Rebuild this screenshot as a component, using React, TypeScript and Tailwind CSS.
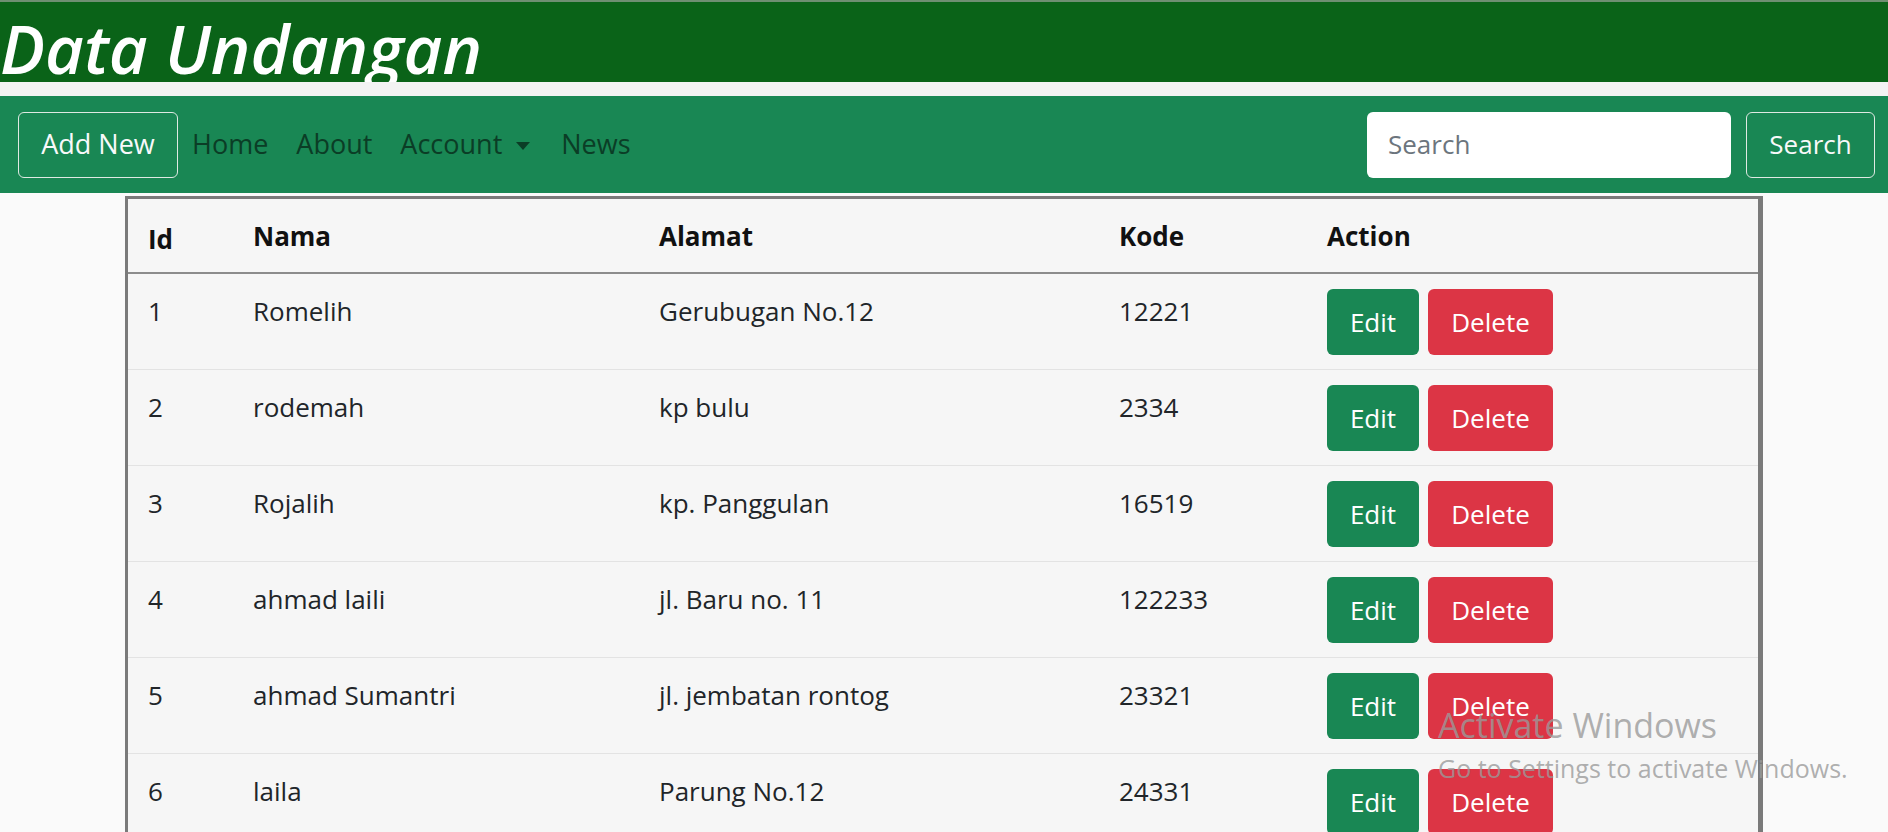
const rows = [
  { id: 1, nama: 'Romelih', alamat: 'Gerubugan No.12', kode: '12221' },
  { id: 2, nama: 'rodemah', alamat: 'kp bulu', kode: '2334' },
  { id: 3, nama: 'Rojalih', alamat: 'kp. Panggulan', kode: '16519' },
  { id: 4, nama: 'ahmad laili', alamat: 'jl. Baru no. 11', kode: '122233' },
  { id: 5, nama: 'ahmad Sumantri', alamat: 'jl. jembatan rontog', kode: '23321' },
  { id: 6, nama: 'laila', alamat: 'Parung No.12', kode: '24331' },
]

export default function App() {
  return (
    <div className="relative min-h-screen overflow-hidden bg-[#fafafa] font-['Open_Sans','Noto_Sans',sans-serif] text-[#212529]">
      {/* Header */}
      <header className="h-[82px] overflow-hidden bg-[#0a6318] border-t-2 border-[#6f8f72]">
        <h1 className="text-[67px] leading-[92px] italic font-semibold text-white">
          Data Undangan
        </h1>
      </header>
      <div className="h-[14px] bg-[#f3f3f3]" />

      {/* Navbar */}
      <nav className="h-[97px] bg-[#198754] flex items-center pl-[18px] pr-[13px]">
        <button className="h-[66px] w-[160px] rounded-[6px] border border-[#dfe9e3] text-[#f8f9fa] text-[27px]">
          Add New
        </button>
        <div className="flex items-center text-[27px] text-[#0b3d26]">
          <a className="px-[14px]">Home</a>
          <a className="px-[14px]">About</a>
          <a className="px-[14px] flex items-center gap-[14px]">
            Account
            <span className="w-0 h-0 border-l-[7px] border-r-[7px] border-t-[8px] border-l-transparent border-r-transparent border-t-[#0b3d26] mt-[2px]" />
          </a>
          <a className="px-[14px] ml-[3px]">News</a>
        </div>
        <div className="ml-auto flex items-center gap-[15px]">
          <div className="h-[66px] w-[364px] rounded-[6px] bg-white flex items-center pl-[21px] text-[26px] text-[#6c757d]">
            Search
          </div>
          <button className="h-[66px] w-[129px] rounded-[6px] border border-[#dfe9e3] text-[#f8f9fa] text-[26px]">
            Search
          </button>
        </div>
      </nav>

      {/* Table */}
      <div className="mt-[3px] ml-[125px] w-[1638px] border-l-[3px] border-r-[5px] border-t-[3px] border-[#7a7a7a] bg-[#f6f6f6]">
        <table className="w-full border-collapse text-[26px]">
          <colgroup>
            <col className="w-[111px]" />
            <col className="w-[406px]" />
            <col className="w-[460px]" />
            <col className="w-[208px]" />
            <col />
          </colgroup>
          <thead>
            <tr className="border-b-[2px] border-[#8c8c8c] text-left font-bold text-[#111]">
              <th className="pl-[20px] pt-[19px] pb-[12px] leading-[42px]">Id</th>
              <th className="pl-[14px] leading-[42px]">Nama</th>
              <th className="pl-[14px] leading-[42px]">Alamat</th>
              <th className="pl-[14px] leading-[42px]">Kode</th>
              <th className="pl-[14px] leading-[42px]">Action</th>
            </tr>
          </thead>
          <tbody>
            {rows.map((r) => (
              <tr key={r.id} className="border-b border-[#e3e3e3] align-top">
                <td className="pl-[20px] pt-[15px] leading-[44px]">{r.id}</td>
                <td className="pl-[14px] pt-[15px] leading-[44px]">{r.nama}</td>
                <td className="pl-[14px] pt-[15px] leading-[44px]">{r.alamat}</td>
                <td className="pl-[14px] pt-[15px] leading-[44px]">{r.kode}</td>
                <td className="pl-[14px] pt-[15px] pb-[14px]">
                  <div className="flex gap-[9px]">
                    <button className="h-[66px] w-[92px] rounded-[6px] bg-[#198754] text-white text-[26px]">Edit</button>
                    <button className="h-[66px] w-[125px] rounded-[6px] bg-[#dc3545] text-white text-[26px]">Delete</button>
                  </div>
                </td>
              </tr>
            ))}
          </tbody>
        </table>
      </div>

      {/* Windows watermark */}
      <div className="absolute left-[1438px] top-[704px] pointer-events-none text-[#9a9a9a]/80 leading-tight">
        <div className="text-[34px]">Activate Windows</div>
        <div className="text-[25px] mt-[6px]">Go to Settings to activate Windows.</div>
      </div>
    </div>
  )
}
